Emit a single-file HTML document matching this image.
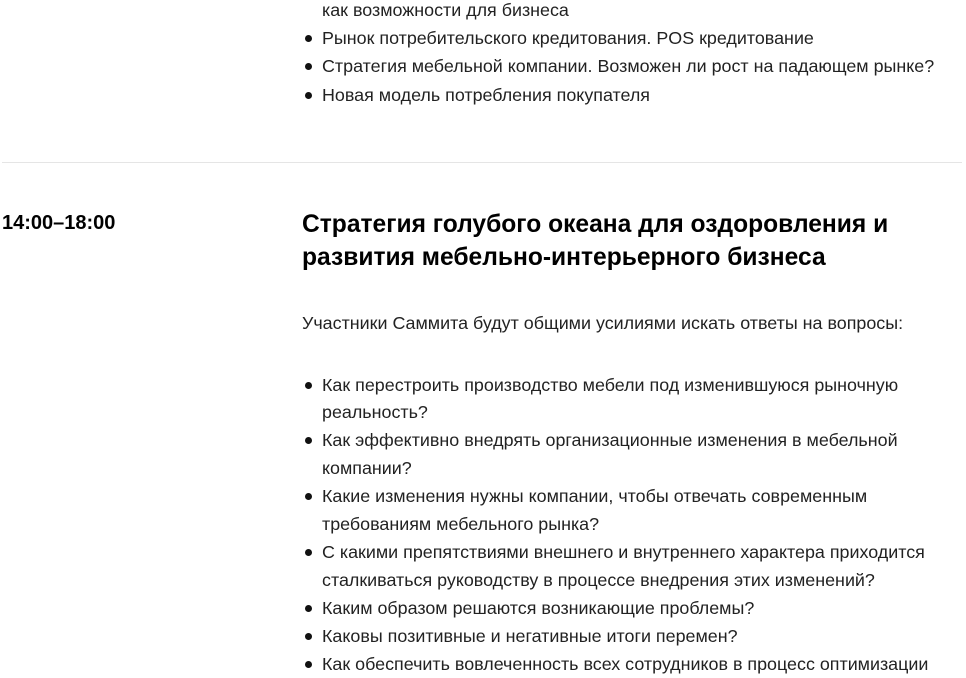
<!DOCTYPE html>
<html><head><meta charset="utf-8"><style>
html,body{margin:0;padding:0;background:#fff;width:966px;height:678px;overflow:hidden}
body{font-family:"Liberation Sans","DejaVu Sans",sans-serif;color:#222;position:relative}
.l{position:absolute;left:322px;font-size:17.9px;line-height:28px;white-space:nowrap}
.b{position:absolute;left:305px;width:7px;height:7px;border-radius:50%;background:#111}
.hr{position:absolute;left:2px;top:162px;width:960px;height:1px;background:#e5e5e5}
.t{position:absolute;left:2px;top:210px;font-weight:bold;font-size:20px;color:#000;line-height:26px}
.h{position:absolute;left:302px;top:208px;font-weight:bold;font-size:24.6px;line-height:33px;color:#000;white-space:nowrap}
.p{position:absolute;left:302px;top:309px;font-size:17.9px;line-height:28px;white-space:nowrap}
</style></head><body>
<div class="l" style="top:-4px">как возможности для бизнеса</div>
<div class="b" style="top:35px"></div><div class="l" style="top:24px">Рынок потребительского кредитования. POS кредитование</div>
<div class="b" style="top:63px"></div><div class="l" style="top:52px">Стратегия мебельной компании. Возможен ли рост на падающем рынке?</div>
<div class="b" style="top:92px"></div><div class="l" style="top:81px">Новая модель потребления покупателя</div>
<div class="hr"></div>
<div class="t">14:00–18:00</div>
<div class="h">Стратегия голубого океана для оздоровления и<br>развития мебельно-интерьерного бизнеса</div>
<div class="p">Участники Саммита будут общими усилиями искать ответы на вопросы:</div>
<div class="b" style="top:382px"></div><div class="l" style="top:371px">Как перестроить производство мебели под изменившуюся рыночную</div>
<div class="l" style="top:398px">реальность?</div>
<div class="b" style="top:437px"></div><div class="l" style="top:426px">Как эффективно внедрять организационные изменения в мебельной</div>
<div class="l" style="top:454px">компании?</div>
<div class="b" style="top:493px"></div><div class="l" style="top:482px">Какие изменения нужны компании, чтобы отвечать современным</div>
<div class="l" style="top:510px">требованиям мебельного рынка?</div>
<div class="b" style="top:549px"></div><div class="l" style="top:538px">С какими препятствиями внешнего и внутреннего характера приходится</div>
<div class="l" style="top:566px">сталкиваться руководству в процессе внедрения этих изменений?</div>
<div class="b" style="top:605px"></div><div class="l" style="top:594px">Каким образом решаются возникающие проблемы?</div>
<div class="b" style="top:633px"></div><div class="l" style="top:622px">Каковы позитивные и негативные итоги перемен?</div>
<div class="b" style="top:661px"></div><div class="l" style="top:650px">Как обеспечить вовлеченность всех сотрудников в процесс оптимизации</div>
</body></html>
